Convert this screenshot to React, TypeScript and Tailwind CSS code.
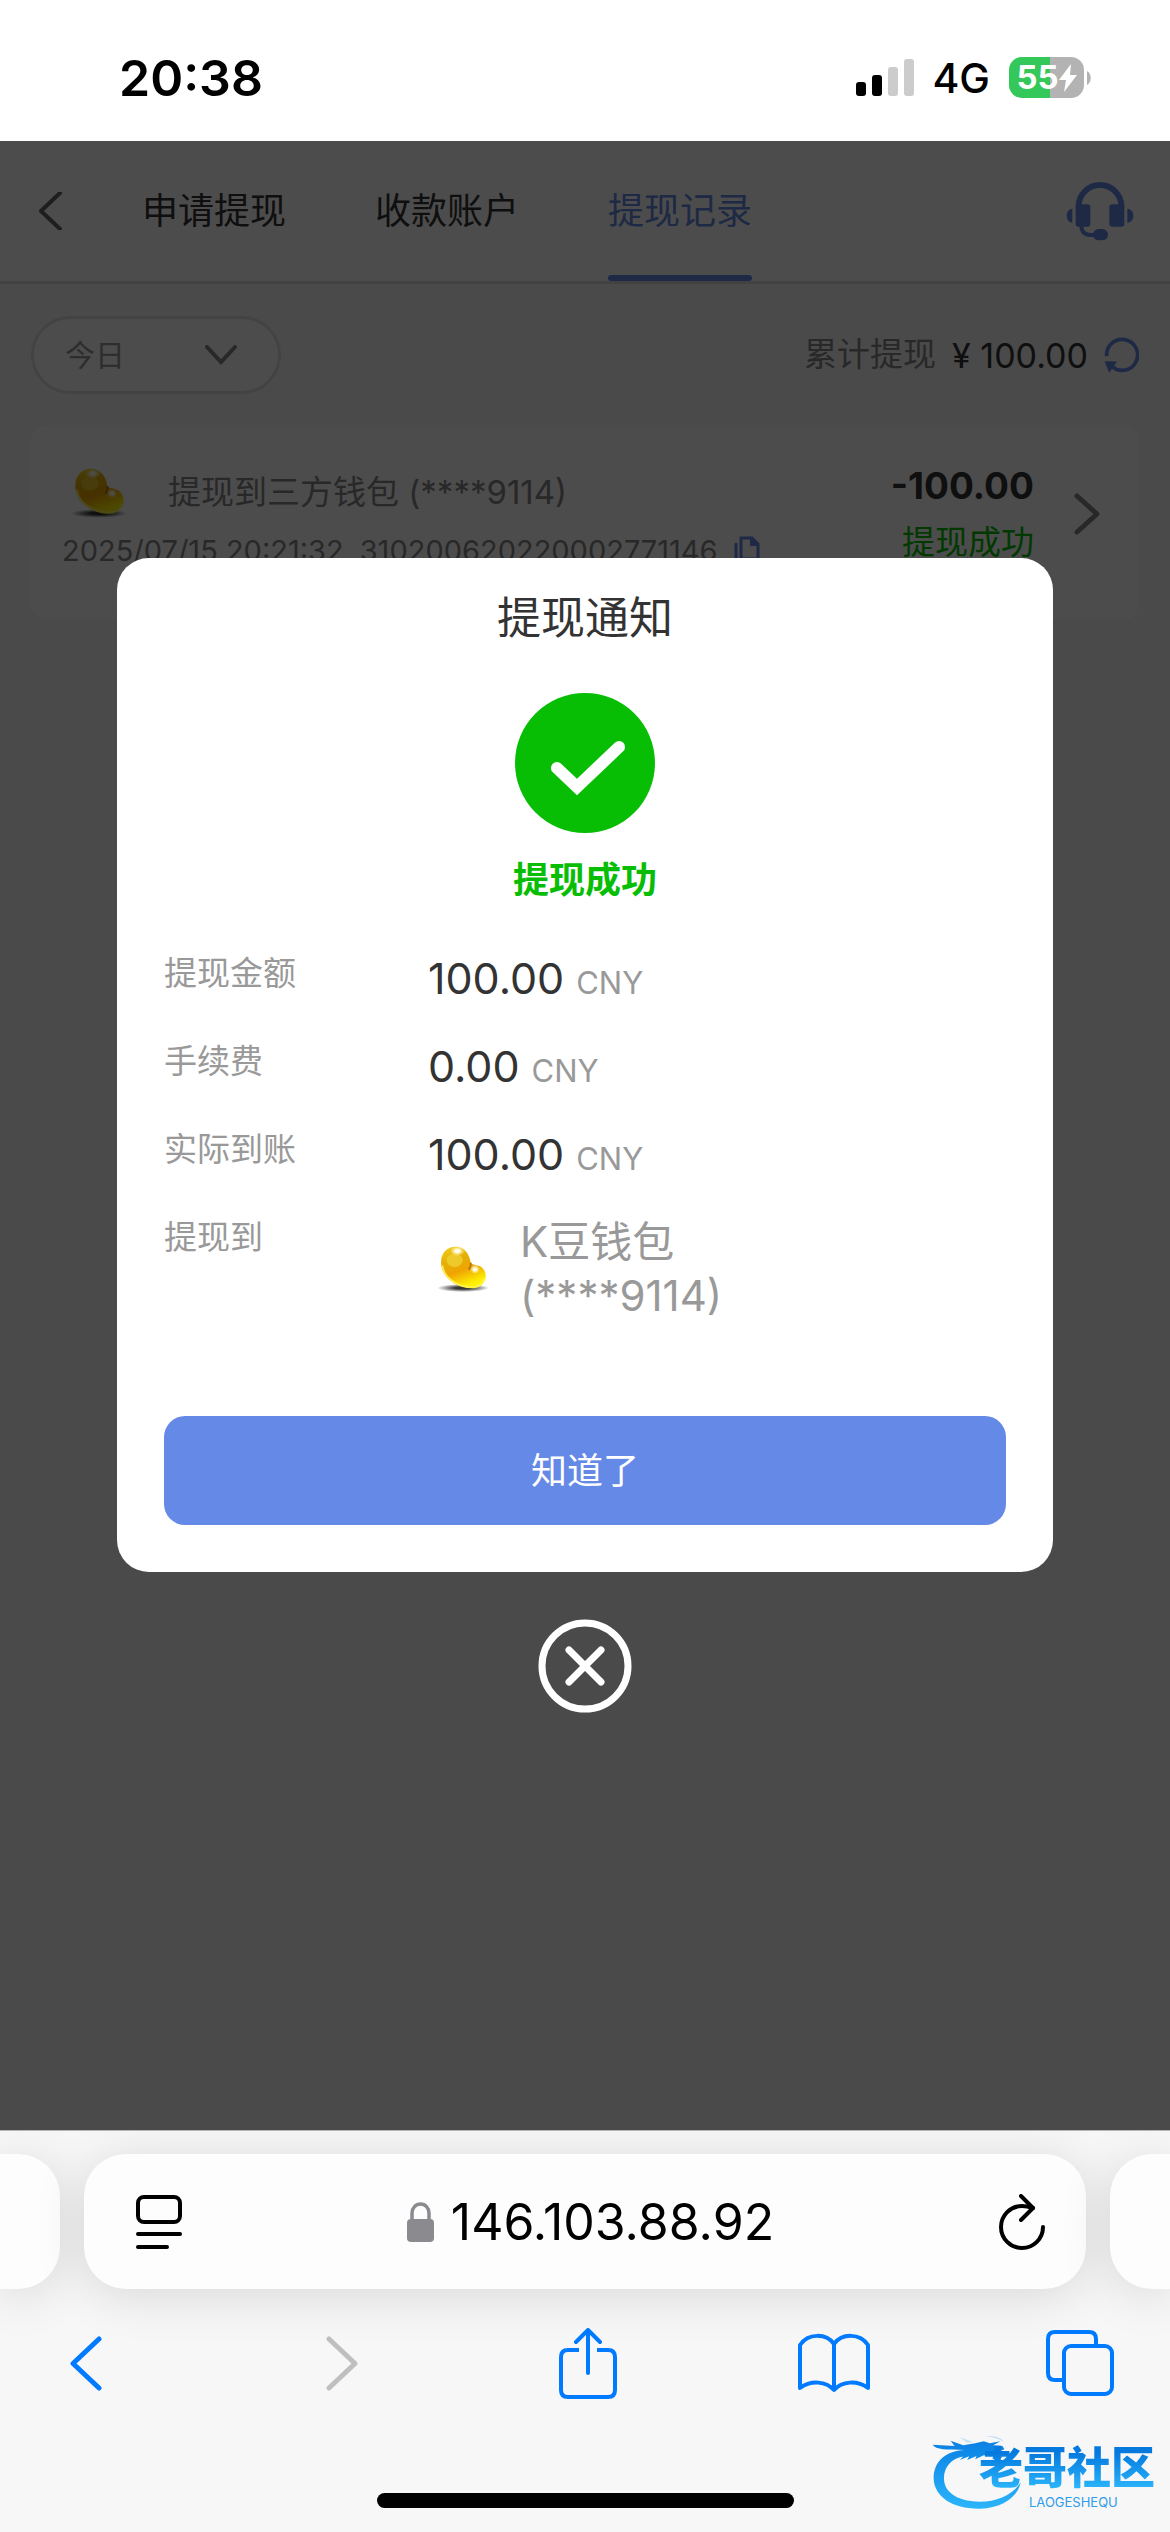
import { useState } from 'react'

type BeanProps = { className: string; id: string }

const Bean = ({ className, id }: BeanProps) => (
  <svg viewBox="54 78 150 142" className={className} aria-hidden="true">
    <defs>
      <linearGradient id={`${id}-body`} x1="0" y1="0" x2="0.4" y2="1">
        <stop offset="0" stopColor="#f6d21c" />
        <stop offset="0.35" stopColor="#e3b008" />
        <stop offset="0.65" stopColor="#efa402" />
        <stop offset="1" stopColor="#fff200" />
      </linearGradient>
      <radialGradient id={`${id}-shadow`}>
        <stop offset="0.3" stopColor="#222" stopOpacity="0.9" />
        <stop offset="1" stopColor="#222" stopOpacity="0" />
      </radialGradient>
      <radialGradient id={`${id}-shine`}>
        <stop offset="0.3" stopColor="#fffde8" />
        <stop offset="1" stopColor="#fff6a0" stopOpacity="0" />
      </radialGradient>
    </defs>
    <ellipse cx="129" cy="207" rx="78" ry="12" fill={`url(#${id}-shadow)`} />
    <path
      d="M63 130C63 100 83 83 107 83C130 83 148 100 152 131C158 138 170 137 180 142C194 149 200 165 196 180C192 198 175 208 155 208C110 208 63 175 63 130Z"
      fill={`url(#${id}-body)`}
    />
    <path
      d="M67 140C72 178 115 204 155 204C172 204 188 196 192 180"
      fill="none"
      stroke="#fff45a"
      strokeWidth="5"
    />
    <ellipse cx="104" cy="124" rx="24" ry="20" fill="#f0cf33" opacity="0.8" />
    <path d="M152 131C153 140 151 147 146 152" fill="none" stroke="#b5720a" strokeWidth="5" />
    <ellipse cx="112" cy="96" rx="22" ry="15" fill={`url(#${id}-shine)`} />
    <ellipse cx="165" cy="151" rx="15" ry="14" fill={`url(#${id}-shine)`} />
  </svg>
)

const StatusBar = () => (
  <header className="flex h-[141px] shrink-0 items-center justify-between bg-white pr-[79px] pl-[119px]">
    <span className="pt-[14px] text-[50px] leading-[60px] font-semibold text-black">20:38</span>
    <div className="flex items-center pt-[14px]">
      <svg viewBox="0 0 58 37" className="w-[58px]" aria-hidden="true">
        <rect y="23" width="10" height="14" rx="3" />
        <rect x="16" y="16" width="10" height="21" rx="3" />
        <rect x="32" y="8" width="10" height="29" rx="3" fill="#ccc" />
        <rect x="48" width="10" height="37" rx="3" fill="#ccc" />
      </svg>
      <span className="ml-[18px] text-[41px] leading-[48px] font-medium text-black">4G</span>
      <div className="ml-[19px] flex h-[41px] w-[75px] items-center justify-center rounded-[13px] bg-linear-to-r from-[#34c759] from-55% to-[#b3b3b3] to-55% text-white">
        <span className="text-[33px] leading-[41px] font-bold">55</span>
        <svg viewBox="0 0 18 28" className="w-[18px]" fill="currentColor" aria-hidden="true">
          <path d="M12 0L0 16H7L5 28L18 11H11Z" />
        </svg>
      </div>
      <svg viewBox="0 0 4 14" className="ml-[3px] w-[4px]" fill="#b3b3b3" aria-hidden="true">
        <path d="M0 0C5 3 5 11 0 14Z" />
      </svg>
    </div>
  </header>
)

const tabs = ['申请提现', '收款账户', '提现记录']

const TopNav = () => (
  <nav className="flex h-[143px] items-stretch border-b-[3px] border-[#dedede] bg-white pr-[36px] pl-[38px]">
    <button type="button" aria-label="返回" className="w-[24px]">
      <svg viewBox="0 0 24 38" className="w-[24px]" fill="none" stroke="#666" strokeWidth="4">
        <path d="M22 1L3 19L22 37" strokeLinecap="round" strokeLinejoin="round" />
      </svg>
    </button>
    <div className="ml-[80px] flex flex-1 gap-[89px]">
      {tabs.map((tab) => (
        <button
          key={tab}
          type="button"
          className={
            tab === '提现记录'
              ? 'relative text-[36px] text-[#6489e6]'
              : 'relative text-[36px] text-[#333]'
          }
        >
          {tab}
          {tab === '提现记录' && (
            <span className="absolute inset-x-0 bottom-0 h-[6px] rounded-full bg-[#6489e6]" />
          )}
        </button>
      ))}
    </div>
    <button type="button" aria-label="客服">
      <svg viewBox="50 62 204 180" className="w-[68px] text-[#6489e6]" fill="currentColor">
        <path d="M88 142V138a64 64 0 0 1 128 0V142" fill="none" stroke="currentColor" strokeWidth="18" />
        <rect x="79" y="132" width="44" height="67" rx="9" />
        <rect x="180" y="132" width="45" height="67" rx="9" />
        <path d="M69 145C58 147 52 155 52 166S58 185 69 187Z" />
        <path d="M234 145C246 147 252 155 252 166S246 185 234 187Z" />
        <path d="M96 195C96 216 106 224 124 224H140" fill="none" stroke="currentColor" strokeWidth="12" />
        <rect x="131" y="206" width="45" height="34" rx="17" />
      </svg>
    </button>
  </nav>
)

const Toolbar = () => (
  <div className="flex items-center justify-between">
    <div className="relative w-[250px]">
      <select
        aria-label="日期"
        defaultValue="today"
        className="h-[78px] w-full appearance-none rounded-full border-[3px] border-[#e0e0e0] bg-white pl-[31px] text-[30px] text-[#999]"
      >
        <option value="today">今日</option>
        <option value="yesterday">昨日</option>
        <option value="week">近七日</option>
      </select>
      <svg
        viewBox="0 0 32 20"
        className="pointer-events-none absolute top-[29px] right-[44px] w-[32px]"
        fill="none"
        stroke="#888"
        strokeWidth="4"
        strokeLinecap="round"
        aria-hidden="true"
      >
        <path d="M2 2L16 17L30 2" />
      </svg>
    </div>
    <div className="flex items-center text-[33px]">
      <span className="text-[#888]">累计提现</span>
      <span className="ml-[16px] text-[34px] text-[#333]">¥ 100.00</span>
      <button type="button" aria-label="刷新" className="ml-[16px]">
        <svg viewBox="166 528 104 108" className="w-[35px] text-[#6489e6]">
          <path d="M174 585A46 46 0 1 1 190 616" fill="none" stroke="currentColor" strokeWidth="11" />
          <path d="M168 600L205 601L181 634Z" fill="currentColor" />
        </svg>
      </button>
    </div>
  </div>
)

const RecordCard = () => (
  <article className="mt-[31px] flex h-[195px] items-start justify-between rounded-[16px] bg-white pt-[40px] pr-[38px] pl-[31px]">
    <div>
      <div className="flex h-[56px] items-center pl-[10px] text-[33px] text-[#888]">
        <Bean id="record" className="w-[54px]" />
        <span className="ml-[42px]">提现到三方钱包 (****9114)</span>
      </div>
      <div className="mt-[10px] flex items-center text-[29px] leading-[40px] text-[#888]">
        <span>2025/07/15 20:21:32</span>
        <span className="ml-[16px]">310200620220002771146</span>
        <button type="button" aria-label="复制" className="ml-[16px]">
          <svg viewBox="0 0 26 30" className="w-[26px] text-[#6489e6]" fill="none" stroke="currentColor" strokeWidth="3">
            <path d="M2 7V28H17M7 2H18L24 8V23H7Z" />
            <path d="M16 0L26 10H16Z" fill="currentColor" stroke="none" />
          </svg>
        </button>
      </div>
    </div>
    <div className="flex items-center">
      <div className="text-right">
        <p className="text-[37px] leading-[42px] font-bold text-[#333]">-100.00</p>
        <p className="mt-[14px] text-[33px] leading-[42px] text-[#07be05]">提现成功</p>
      </div>
      <button type="button" aria-label="详情" className="ml-[40px]">
        <svg viewBox="0 0 27 42" className="w-[27px]" fill="none" stroke="#888" strokeWidth="5">
          <path d="M3 3L23 21L3 39" strokeLinecap="round" strokeLinejoin="round" />
        </svg>
      </button>
    </div>
  </article>
)

const amounts = [
  { label: '提现金额', value: '100.00' },
  { label: '手续费', value: '0.00' },
  { label: '实际到账', value: '100.00' },
]

const NoticeDialog = ({ onClose }: { onClose: () => void }) => (
  <div className="absolute inset-0 flex flex-col items-center justify-center bg-black/70">
    <section
      role="dialog"
      aria-labelledby="notice-title"
      className="flex w-4/5 flex-col items-center rounded-[32px] bg-white px-[47px] pt-[30px] pb-[47px]"
    >
      <h2 id="notice-title" className="text-[44px] leading-[60px] text-[#333]">
        提现通知
      </h2>
      <svg viewBox="0 0 140 140" className="mt-[45px] w-[140px]" aria-hidden="true">
        <circle cx="70" cy="70" r="70" fill="#07be05" />
        <path d="M42 75L62 94L104 54" fill="none" stroke="#fff" strokeWidth="12" strokeLinecap="round" />
      </svg>
      <p className="mt-[23px] text-[36px] leading-[48px] font-bold text-[#07be05]">提现成功</p>
      <dl className="mt-[47px] flex w-full flex-col gap-[34px] text-[#999]">
        {amounts.map((item) => (
          <div key={item.label} className="flex items-start">
            <dt className="w-[264px] text-[33px] leading-[44px]">{item.label}</dt>
            <dd className="flex items-baseline gap-[12px]">
              <span className="text-[43px] leading-[54px] text-[#333]">{item.value}</span>
              <span className="text-[31px] leading-[40px]">CNY</span>
            </dd>
          </div>
        ))}
        <div className="flex items-start">
          <dt className="w-[264px] text-[33px] leading-[44px]">提现到</dt>
          <dd className="flex items-center pl-[10px] text-[42px] leading-[54px]">
            <Bean id="notice" className="w-[50px]" />
            <span className="ml-[32px]">
              K豆钱包
              <br />
              (****9114)
            </span>
          </dd>
        </div>
      </dl>
      <button
        type="button"
        onClick={onClose}
        className="mt-[93px] h-[109px] w-full rounded-[21px] bg-[#6489e6] text-[36px] text-white"
      >
        知道了
      </button>
    </section>
    <button type="button" aria-label="关闭" onClick={onClose} className="mt-[47px]">
      <svg viewBox="0 0 94 94" className="w-[94px]" fill="none" stroke="#fff">
        <circle cx="47" cy="47" r="43" strokeWidth="7" />
        <path d="M31 31L63 63M63 31L31 63" strokeWidth="7" strokeLinecap="round" />
      </svg>
    </button>
  </div>
)

const Watermark = () => (
  <div className="absolute right-[15px] bottom-[22px] flex items-end">
    <svg viewBox="60 30 280 230" className="-mr-[44px] w-[93px]" aria-hidden="true">
      <defs>
        <linearGradient id="dragon" x1="0" y1="0" x2="0" y2="1">
          <stop offset="0" stopColor="#0a80e4" />
          <stop offset="1" stopColor="#2bb5fb" />
        </linearGradient>
      </defs>
      <g fill="url(#dragon)">
        <path d="M165 78C105 80 70 115 71 165C73 220 130 257 212 255C275 253 325 220 333 175C312 210 265 234 210 234C150 234 103 210 102 165C101 130 125 103 160 98L150 108L178 97L172 108L200 96L196 106L222 94L250 96L248 106L276 102L274 92L256 88L284 76L278 66L250 64L272 52L240 58L222 52L196 58L160 64L122 50L134 66L68 62C78 78 110 76 165 78Z" />
        <path d="M150 40L190 54L172 56ZM228 36C256 34 280 44 282 54C268 44 250 40 228 36Z" opacity="0.25" />
      </g>
    </svg>
    <div className="flex flex-col">
      <span className="bg-linear-to-b from-[#0579de] from-20% to-[#2bb5fb] to-90% bg-clip-text text-[44px] leading-[52px] font-black text-transparent">
        老哥社区
      </span>
      <span className="pl-[50px] text-[13px] leading-[16px] text-[#2f9cec]">LAOGESHEQU</span>
    </div>
  </div>
)

const BrowserBar = () => (
  <footer className="relative flex h-[402px] shrink-0 flex-col overflow-hidden border-t border-[#b5b5b5] bg-[#f7f7f7]">
    <div className="mt-[23px] flex h-[135px] gap-[24px]">
      <div className="w-[60px] rounded-r-[42px] bg-[#fdfdfd] shadow-[0_6px_50px_rgba(0,0,0,0.13)]" />
      <div className="flex flex-1 items-center rounded-[42px] bg-[#fdfdfd] pr-[41px] pl-[52px] shadow-[0_6px_50px_rgba(0,0,0,0.13)]">
        <button type="button" aria-label="页面菜单">
          <svg viewBox="0 0 46 54" className="w-[46px]" fill="none" stroke="#000" strokeWidth="4" strokeLinecap="round">
            <rect x="2" y="2" width="42" height="25" rx="6" />
            <path d="M2 39H44M2 52H31" />
          </svg>
        </button>
        <label className="flex flex-1 items-center justify-center gap-[17px]">
          <svg viewBox="0 0 27 40" className="w-[27px]" aria-label="安全">
            <rect y="17" width="27" height="23" rx="4" fill="#8a8a8f" />
            <path d="M5 18V11a8.500 9 0 0 1 17 0V18" fill="none" stroke="#8a8a8f" strokeWidth="3.500" />
          </svg>
          <input
            type="text"
            aria-label="地址"
            defaultValue="146.103.88.92"
            className="field-sizing-content bg-transparent text-[50px] leading-[60px] text-black outline-none"
          />
        </label>
        <button type="button" aria-label="重新加载">
          <svg viewBox="0 0 46 56" className="w-[46px]" fill="none" stroke="#000" strokeWidth="4" strokeLinecap="round">
            <path d="M34 14C31 13 27 12 23 12A21 21 0 1 0 44 33" strokeLinejoin="round" />
            <path d="M22 2L34 14L22 26" strokeLinejoin="round" />
          </svg>
        </button>
      </div>
      <div className="w-[60px] rounded-l-[42px] bg-[#fdfdfd] shadow-[0_6px_50px_rgba(0,0,0,0.13)]" />
    </div>
    <nav className="mt-[32px] flex h-[84px] items-center justify-between pr-[50px] pl-[46px] text-[#007aff]">
      <div className="flex gap-[176px]">
        <button type="button" aria-label="后退" className="flex w-[80px] justify-center">
          <svg viewBox="0 0 32 55" className="w-[32px]" fill="none" stroke="currentColor" strokeWidth="5">
            <path d="M29 3L3 27.500L29 52" strokeLinecap="round" strokeLinejoin="round" />
          </svg>
        </button>
        <button type="button" aria-label="前进" disabled className="flex w-[80px] justify-center text-[#bfbfbf]">
          <svg viewBox="0 0 32 55" className="w-[32px]" fill="none" stroke="currentColor" strokeWidth="5">
            <path d="M3 3L29 27.500L3 52" strokeLinecap="round" strokeLinejoin="round" />
          </svg>
        </button>
      </div>
      <button type="button" aria-label="分享" className="flex w-[80px] justify-center">
        <svg viewBox="0 0 58 71" className="w-[58px]" fill="none" stroke="currentColor" strokeWidth="4">
          <path d="M20 22H9Q2 22 2 29V62Q2 69 9 69H49Q56 69 56 62V29Q56 22 49 22H38" />
          <path d="M29 45V2M17 14L29 2L41 14" strokeLinecap="round" strokeLinejoin="round" />
        </svg>
      </button>
      <button type="button" aria-label="书签" className="flex w-[80px] justify-center">
        <svg viewBox="0 0 72 60" className="w-[72px]" fill="none" stroke="currentColor" strokeWidth="4" strokeLinejoin="round">
          <path d="M36 11V57C28 48 13 47 2 55V12C10 0 28 0 36 11C44 0 62 0 70 12V55C59 47 44 48 36 57" />
        </svg>
      </button>
      <button type="button" aria-label="标签页" className="flex w-[80px] justify-center">
        <svg viewBox="0 0 68 66" className="w-[68px]" fill="none" stroke="currentColor" strokeWidth="4">
          <rect x="18" y="16" width="48" height="48" rx="7" />
          <path d="M50 15V9Q50 2 43 2H9Q2 2 2 9V43Q2 50 9 50H17" />
        </svg>
      </button>
    </nav>
    <div className="mt-auto mb-[24px] h-[15px] w-[417px] self-center rounded-full bg-black" />
    <Watermark />
  </footer>
)

export default function App() {
  const [showNotice, setShowNotice] = useState(true)

  return (
    <div className="flex min-h-screen flex-col font-['Inter','Noto_Sans_CJK_SC',sans-serif]">
      <StatusBar />
      <main className="relative flex-1 bg-[#f7f7f7]">
        <TopNav />
        <div className="px-[31px] pt-[32px]">
          <Toolbar />
          <RecordCard />
        </div>
        {showNotice && <NoticeDialog onClose={() => setShowNotice(false)} />}
      </main>
      <BrowserBar />
    </div>
  )
}
